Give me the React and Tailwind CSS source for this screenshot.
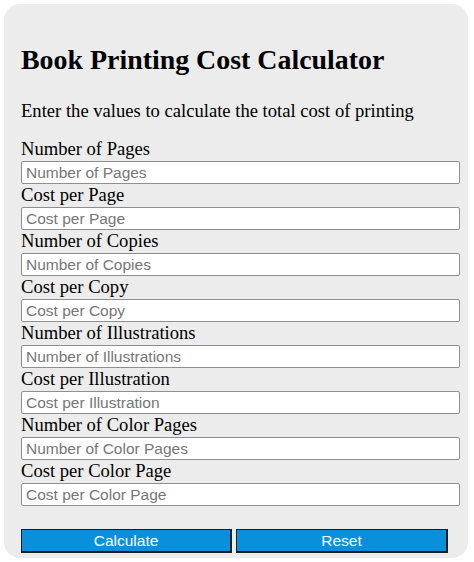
const FIELDS = [
  'Number of Pages',
  'Cost per Page',
  'Number of Copies',
  'Cost per Copy',
  'Number of Illustrations',
  'Cost per Illustration',
  'Number of Color Pages',
  'Cost per Color Page',
];

const serif = "font-['Liberation_Serif','Times_New_Roman',serif]";
const sans = "font-['Liberation_Sans',Arial,sans-serif]";

function Field({ label }) {
  return (
    <div className="flex flex-col">
      <label className="block h-[21px] text-[18.6px] leading-[21px] text-black">{label}</label>
      <input
        type="text"
        placeholder={label}
        className={`${sans} mt-[2px] h-[23px] w-[439px] rounded-[2px] border border-[#8f8f8f] bg-white px-[4px] text-[15.5px] text-black outline-none placeholder:text-[#767676]`}
      />
    </div>
  );
}

export default function App() {
  return (
    <div className="min-h-[562px] bg-white p-[4px]">
      <div className={`${serif} h-[554px] w-[464px] rounded-[16px] bg-[#ececec] pl-[17px] pt-[40px]`}>
        <h2 className="text-[27.9px] font-bold leading-[31px] text-black">Book Printing Cost Calculator</h2>
        <p className="mt-[25px] text-[18.6px] leading-[21px] text-black">
          Enter the values to calculate the total cost of printing
        </p>
        <div className="mt-[17px] flex flex-col gap-0">
          {FIELDS.map((f) => (
            <Field key={f} label={f} />
          ))}
        </div>
        <div className="mt-[23px] flex gap-[4px]">
          <button
            className={`${sans} h-[24px] w-[211px] border border-b-2 border-r-2 border-[#1c1c1c] bg-[#0a90db] text-[15.5px] leading-none text-white`}
          >
            Calculate
          </button>
          <button
            className={`${sans} h-[24px] w-[212px] border border-b-2 border-r-2 border-[#1c1c1c] bg-[#0a90db] text-[15.5px] leading-none text-white`}
          >
            Reset
          </button>
        </div>
      </div>
    </div>
  );
}
